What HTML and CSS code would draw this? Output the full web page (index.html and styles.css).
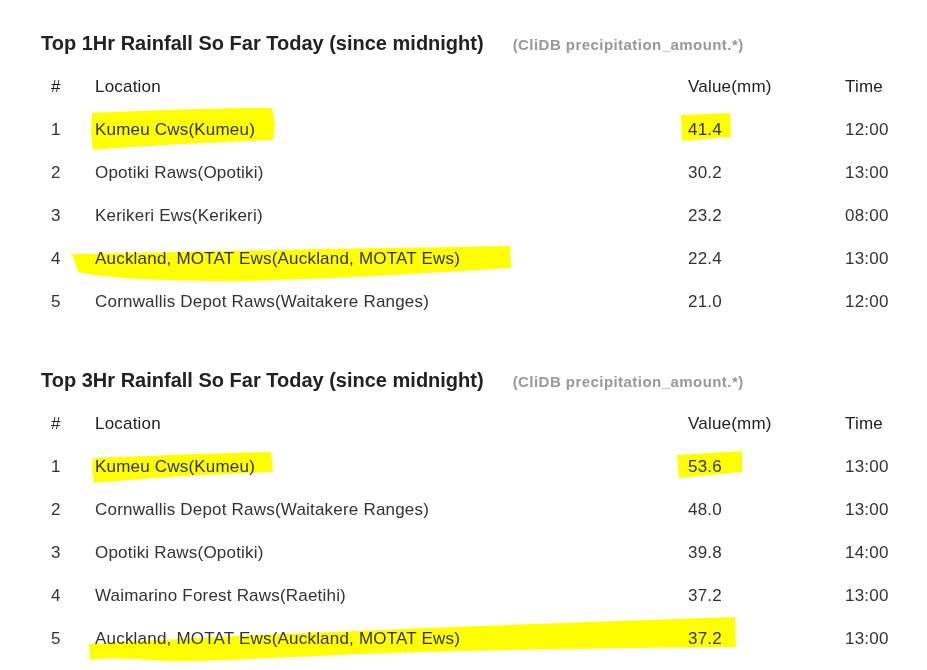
FILE: index.html
```html
<!DOCTYPE html>
<html>
<head>
<meta charset="utf-8">
<link rel="stylesheet" href="styles.css">
</head>
<body>
<div class="page">
  <section class="block">
    <h2 class="title">Top 1Hr Rainfall So Far Today (since midnight)<span class="sub">(CliDB precipitation_amount.*)</span></h2>
    <table class="rank">
      <colgroup><col class="c-num"><col class="c-loc"><col class="c-val"><col class="c-time"></colgroup>
      <thead><tr><th>#</th><th>Location</th><th>Value(mm)</th><th>Time</th></tr></thead>
      <tbody>
        <tr><td>1</td><td>Kumeu Cws(Kumeu)</td><td>41.4</td><td>12:00</td></tr>
        <tr><td>2</td><td>Opotiki Raws(Opotiki)</td><td>30.2</td><td>13:00</td></tr>
        <tr><td>3</td><td>Kerikeri Ews(Kerikeri)</td><td>23.2</td><td>08:00</td></tr>
        <tr><td>4</td><td>Auckland, MOTAT Ews(Auckland, MOTAT Ews)</td><td>22.4</td><td>13:00</td></tr>
        <tr><td>5</td><td>Cornwallis Depot Raws(Waitakere Ranges)</td><td>21.0</td><td>12:00</td></tr>
      </tbody>
    </table>
  </section>
  <section class="block">
    <h2 class="title">Top 3Hr Rainfall So Far Today (since midnight)<span class="sub">(CliDB precipitation_amount.*)</span></h2>
    <table class="rank">
      <colgroup><col class="c-num"><col class="c-loc"><col class="c-val"><col class="c-time"></colgroup>
      <thead><tr><th>#</th><th>Location</th><th>Value(mm)</th><th>Time</th></tr></thead>
      <tbody>
        <tr><td>1</td><td>Kumeu Cws(Kumeu)</td><td>53.6</td><td>13:00</td></tr>
        <tr><td>2</td><td>Cornwallis Depot Raws(Waitakere Ranges)</td><td>48.0</td><td>13:00</td></tr>
        <tr><td>3</td><td>Opotiki Raws(Opotiki)</td><td>39.8</td><td>14:00</td></tr>
        <tr><td>4</td><td>Waimarino Forest Raws(Raetihi)</td><td>37.2</td><td>13:00</td></tr>
        <tr><td>5</td><td>Auckland, MOTAT Ews(Auckland, MOTAT Ews)</td><td>37.2</td><td>13:00</td></tr>
      </tbody>
    </table>
  </section>
</div>
<svg class="marker" width="927" height="670" viewBox="0 0 927 670" aria-hidden="true">
  <path d="M92 113 C140 111 210 108 272 108 L275 124 L273 140 C230 142 160 144 93 150 L91 132 Z"/>
  <path d="M681 115 L730 113 L731 137 L682 141 Z"/>
  <path d="M72 254 C160 252 330 249 510 246 L511 268 C420 274 300 280 240 281 C170 281 110 279 78 272 Z"/>
  <path d="M93 458 C150 456 220 453 271 452 L273 472 C210 474 150 478 94 483 L92 470 Z"/>
  <path d="M677 455 L742 451 L742 472 L679 478 Z"/>
  <path d="M89 644 C250 634 470 626 735 617 L736 647 C600 648 500 650 420 652 C300 655 200 664 150 660 C120 658 100 658 90 660 Z"/>
</svg>
</body>
</html>
```
FILE: styles.css
```css
html, body {
  margin: 0;
  padding: 0;
  background: #ffffff;
}
body {
  font-family: "Liberation Sans", Arial, sans-serif;
  color: #333333;
  width: 927px;
  height: 670px;
  overflow: hidden;
  position: relative;
}
.page {
  padding: 31px 0 0 41px;
  display: flex;
  flex-direction: column;
  gap: 45px;
}
.title {
  margin: 0 0 8px 0;
  font-size: 20px;
  line-height: 24px;
  font-weight: bold;
  color: #222222;
  white-space: nowrap;
}
.sub {
  margin-left: 29px;
  font-size: 15px;
  letter-spacing: 0.45px;
  color: #999999;
  font-weight: bold;
}
.rank {
  border-collapse: collapse;
  table-layout: fixed;
  width: 870px;
  font-size: 17px;
  letter-spacing: 0.2px;
}
.c-num { width: 44px; }
.c-loc { width: 593px; }
.c-val { width: 157px; }
.c-time { width: 76px; }
.rank th,
.rank td {
  height: 43px;
  padding: 0 0 0 10px;
  text-align: left;
  vertical-align: middle;
  font-weight: normal;
  white-space: nowrap;
  line-height: 20px;
}
.rank th {
  color: #222222;
}
.marker {
  position: absolute;
  top: 0;
  left: 0;
  pointer-events: none;
  mix-blend-mode: multiply;
}
.marker path {
  fill: #ffff00;
}
```
